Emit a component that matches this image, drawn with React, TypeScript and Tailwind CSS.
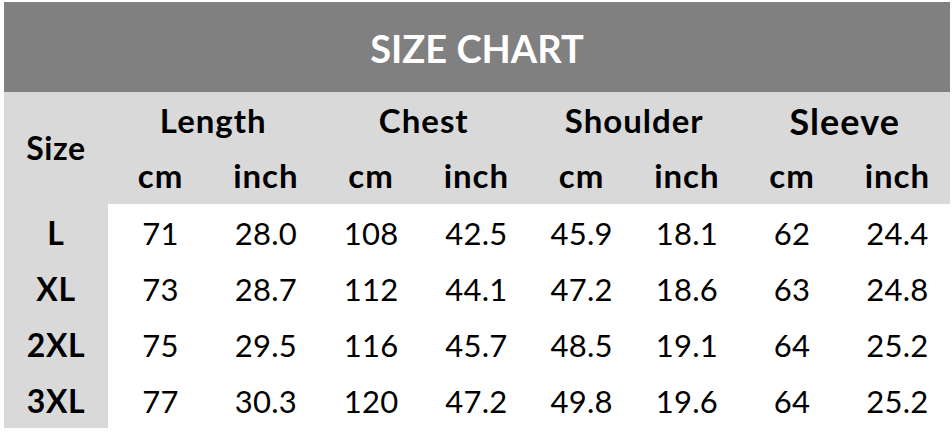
import React from "react";

const groups = ["Length", "Chest", "Shoulder", "Sleeve"];
const rows: [string, string[]][] = [
  ["L", ["71", "28.0", "108", "42.5", "45.9", "18.1", "62", "24.4"]],
  ["XL", ["73", "28.7", "112", "44.1", "47.2", "18.6", "63", "24.8"]],
  ["2XL", ["75", "29.5", "116", "45.7", "48.5", "19.1", "64", "25.2"]],
  ["3XL", ["77", "30.3", "120", "47.2", "49.8", "19.6", "64", "25.2"]],
];

export default function App() {
  return (
    <div className="w-[952px] h-[433px] bg-white pt-[2px] pl-[4px] overflow-hidden" style={{ fontFamily: "Lato, 'Open Sans', sans-serif" }}>
      <div className="w-[946px]">
        <div className="h-[90px] bg-[#808080] flex items-center justify-center text-white font-bold text-[38px] pt-[2px]">
          SIZE CHART
        </div>
        <div className="grid grid-cols-[104px_repeat(8,1fr)] grid-rows-[56px_56px_repeat(4,56px)] text-black">
          <div className="row-span-2 bg-[#d9d9d9] flex items-center justify-center font-bold text-[32px] tracking-[0.02em]">Size</div>
          {groups.map((g) => (
            <div
              key={g}
              className={
                g === "Sleeve"
                  ? "col-span-2 bg-[#d9d9d9] flex items-center justify-center font-bold text-[36px] tracking-[0.03em] pt-[2px]"
                  : "col-span-2 bg-[#d9d9d9] flex items-center justify-center font-bold text-[33px] tracking-[0.03em] pt-[2px]"
              }
            >
              {g}
            </div>
          ))}
          {groups.map((g) => (
            <React.Fragment key={g + "u"}>
              <div className="bg-[#d9d9d9] flex items-center justify-center font-bold text-[33px] tracking-[0.03em]">cm</div>
              <div className="bg-[#d9d9d9] flex items-center justify-center font-bold text-[33px] tracking-[0.03em]">inch</div>
            </React.Fragment>
          ))}
          {rows.map(([s, vals]) => (
            <React.Fragment key={s}>
              <div className="bg-[#d9d9d9] flex items-center justify-center font-bold text-[32px] tracking-[0.02em] pt-[2px]">{s}</div>
              {vals.map((v, i) => (
                <div key={i} className="bg-white flex items-center justify-center text-[31px] tracking-[0.01em] pt-[2px]">{v}</div>
              ))}
            </React.Fragment>
          ))}
        </div>
      </div>
    </div>
  );
}
